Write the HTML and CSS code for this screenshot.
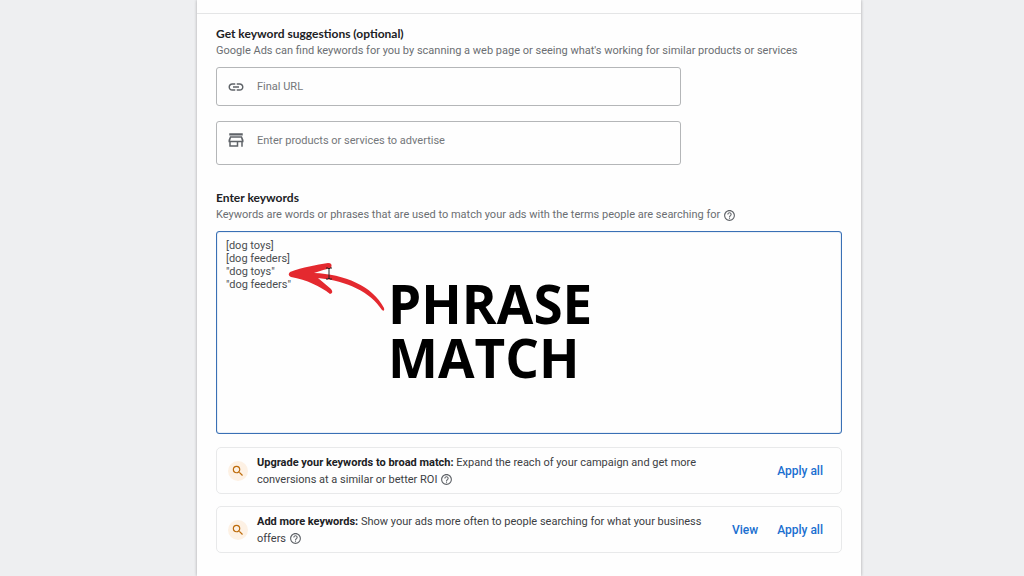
FILE: index.html
```
<!DOCTYPE html>
<html lang="en">
<head>
    <meta charset="UTF-8">
    <meta name="viewport" content="width=device-width, initial-scale=1.0">
    <title>Keywords</title>

    <link rel="stylesheet" href="styles.css">
</head>
<body>
    <svg class="symbols" aria-hidden="true">
        <symbol id="icon-help" viewBox="0 0 24 24">
            <path d="M11 18h2v-2h-2v2zm1-16C6.48 2 2 6.48 2 12s4.48 10 10 10 10-4.48 10-10S17.52 2 12 2zm0 18c-4.41 0-8-3.59-8-8s3.59-8 8-8 8 3.59 8 8-3.59 8-8 8zm0-14c-2.21 0-4 1.79-4 4h2c0-1.1.9-2 2-2s2 .9 2 2c0 2-3 1.75-3 5h2c0-2.25 3-2.500 3-5 0-2.210-1.790-4-4-4z"/>
        </symbol>
        <symbol id="icon-search" viewBox="0 0 24 24">
            <path d="M15.500 14h-.79l-.28-.27A6.470 6.470 0 0 0 16 9.500 6.500 6.500 0 1 0 9.500 16c1.610 0 3.090-.59 4.230-1.570l.27.28v.79l5 4.990L20.490 19l-4.990-5zm-6 0C7.010 14 5 11.990 5 9.500S7.010 5 9.500 5 14 7.010 14 9.500 11.990 14 9.500 14z"/>
        </symbol>
    </svg>

    <main class="panel">
        <header class="panel-header"></header>

        <form class="panel-body">
            <section class="section">
                <h2>Get keyword suggestions (optional)</h2>
                <p class="hint">Google Ads can find keywords for you by scanning a web page or seeing what's working for similar products or services</p>

                <label class="field">
                    <svg class="field-icon" viewBox="0 0 24 24" aria-hidden="true">
                        <path d="M3.900 12c0-1.710 1.390-3.100 3.100-3.100h4V7H7c-2.760 0-5 2.240-5 5s2.240 5 5 5h4v-1.900H7c-1.710 0-3.100-1.390-3.100-3.100zM8 13h8v-2H8v2zm9-6h-4v1.900h4c1.710 0 3.100 1.390 3.100 3.100s-1.390 3.100-3.100 3.100h-4V17h4c2.760 0 5-2.240 5-5s-2.240-5-5-5z"/>
                    </svg>
                    <input type="text" placeholder="Final URL" aria-label="Final URL">
                </label>

                <label class="field field-tall">
                    <svg class="field-icon" viewBox="0 0 24 24" aria-hidden="true">
                        <path d="M3 3h18v3H3zM4 7h16l2 5v3h-1v6h-2v-6h-4v6H3v-6H2v-3zM5.400 9L4.200 13h15.600L18.600 9zM5 15v4h8v-4z" fill-rule="evenodd"/>
                    </svg>
                    <input type="text" placeholder="Enter products or services to advertise" aria-label="Products or services">
                </label>
            </section>

            <section class="section">
                <h2><label for="keywords">Enter keywords</label></h2>
                <p class="hint">Keywords are words or phrases that are used to match your ads with the terms people are searching for <svg class="help-icon"><use href="#icon-help"/></svg></p>

                <div class="keywords">
                    <textarea id="keywords" spellcheck="false">[dog toys]
[dog feeders]
"dog toys"
"dog feeders"</textarea>
                    <svg class="arrow" viewBox="0 0 100 52" aria-hidden="true">
                        <path d="M3 10C16 5 29 3 41 1Q46 1 44 6Q35 8 27 11C57 12 86 24 97 46Q98 50 95 48C83 30 61 19 31 16L44 27Q47 31 43 32C33 24 20 18 4 15Q0 13 3 10Z"/>
                        <path class="cursor" d="M39 6h2l1 1 1-1h2M42 7v9M39 17h2l1-1 1 1h2"/>
                    </svg>
                    <strong class="callout">PHRASE<br>MATCH</strong>
                </div>
            </section>

            <section class="suggestions">
                <div class="suggestion">
                    <span class="badge"><svg><use href="#icon-search"/></svg></span>
                    <p><b>Upgrade your keywords to broad match:</b> Expand the reach of your campaign and get more conversions at a similar or better ROI <svg class="help-icon"><use href="#icon-help"/></svg></p>
                    <div class="actions">
                        <button type="button">Apply all</button>
                    </div>
                </div>
                <div class="suggestion">
                    <span class="badge"><svg><use href="#icon-search"/></svg></span>
                    <p><b>Add more keywords:</b> Show your ads more often to people searching for what your business offers <svg class="help-icon"><use href="#icon-help"/></svg></p>
                    <div class="actions">
                        <button type="button">View</button>
                        <button type="button">Apply all</button>
                    </div>
                </div>
            </section>
        </form>
    </main>
</body>
</html>
```
FILE: styles.css
```
* {
    box-sizing: border-box;
}

body {
    font-family: Roboto, Arial, sans-serif;
    font-size: 11px;
    line-height: 16px;
    background: #eeeff1;
    color: #3c4043;
    margin: 0;
    padding: 0 163px 0 197px;
}

.symbols {
    display: none;
}

.panel {
    min-height: 100vh;
    background: #fefefe;
    box-shadow: 0 0 3px rgba(0, 0, 0, 0.3);
}

.panel-header {
    height: 14px;
    border-bottom: 1px solid #e4e5e6;
}

.panel-body {
    padding: 12px 19px 0;
}

h2 {
    font-family: Lato, Roboto, sans-serif;
    font-size: 12px;
    font-weight: bold;
    line-height: 16px;
    color: #202124;
    margin: 0;
}

p {
    margin: 0;
}

.section {
    margin-bottom: 25px;
}

.hint {
    color: #6b6e72;
    line-height: 17px;
    margin-bottom: 8px;
}

.help-icon {
    width: 13px;
    height: 13px;
    fill: #5f6368;
    vertical-align: middle;
}

/* Text fields */
.field {
    display: flex;
    align-items: center;
    gap: 12px;
    max-width: 465px;
    height: 39px;
    padding: 0 10px;
    border: 1px solid #b4b6b8;
    border-radius: 3px;
}

.field-tall {
    align-items: flex-start;
    height: 44px;
    margin-top: 15px;
    padding-top: 9px;
}

.field-icon {
    width: 18px;
    height: 18px;
    fill: #5f6368;
}

.field input {
    flex: 1;
    height: 18px;
    padding: 0;
    border: none;
    outline: none;
    background: none;
    font: inherit;
    color: #3c4043;
}

.field input::placeholder {
    color: #74777a;
    opacity: 1;
}

/* Keyword box */
.section:nth-of-type(2) {
    margin-bottom: 13px;
}

.keywords {
    position: relative;
}

textarea {
    display: block;
    width: 100%;
    height: 203px;
    padding: 7px 9px;
    border: 1px solid #3970b5;
    border-radius: 3px;
    outline: none;
    resize: none;
    background: none;
    box-shadow: inset 0 0 1px #3970b5;
    font: inherit;
    line-height: 13px;
    color: #4a4d50;
}

.arrow {
    position: absolute;
    left: 71px;
    top: 31px;
    width: 100px;
    height: 52px;
    fill: #e4292f;
}

.arrow .cursor {
    fill: none;
    stroke: #222;
}

.callout {
    position: absolute;
    left: 172px;
    top: 46px;
    font-family: "Open Sans", sans-serif;
    font-size: 53px;
    font-weight: bold;
    line-height: 54px;
    color: #000;
}

/* Suggestion cards */
.suggestions {
    display: grid;
    gap: 12px;
}

.suggestion {
    display: flex;
    align-items: center;
    min-height: 47px;
    padding: 5px 18px 5px 11px;
    border: 1px solid #e8e9ea;
    border-radius: 5px;
}

.suggestion p {
    flex: 1;
    max-width: 460px;
    margin-left: 9px;
    line-height: 17px;
}

.suggestion b {
    color: #202124;
}

.badge {
    display: flex;
    align-items: center;
    justify-content: center;
    width: 20px;
    height: 20px;
    border-radius: 50%;
    background: #fdf1e4;
}

.badge svg {
    width: 14px;
    height: 14px;
    fill: #bd6b0a;
}

.actions {
    display: flex;
    gap: 19px;
    margin-left: auto;
}

button {
    padding: 0;
    border: none;
    background: none;
    font-family: Roboto, Arial, sans-serif;
    font-size: 12px;
    font-weight: 500;
    line-height: 16px;
    color: #1a6fd0;
    cursor: pointer;
}
```
